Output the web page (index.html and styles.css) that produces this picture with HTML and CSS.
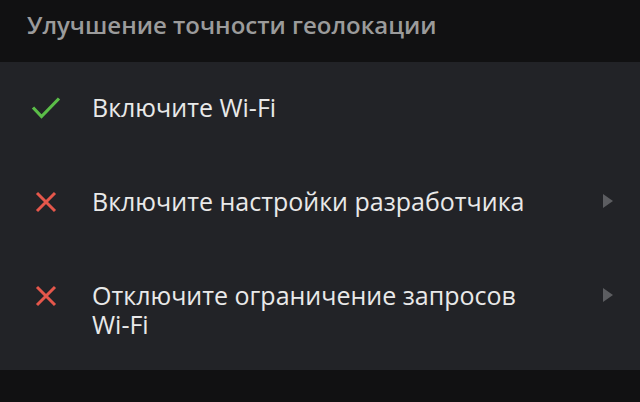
FILE: index.html
```html
<!DOCTYPE html>
<html lang="ru">
<head>
    <meta charset="UTF-8">
    <meta name="viewport" content="width=device-width, initial-scale=1.0">
    <title>Улучшение точности геолокации</title>
    <link rel="stylesheet" href="styles.css">
</head>
<body>
    <div class="header">
        <h2>Улучшение точности геолокации</h2>
    </div>

    <ul class="checklist">
        <li class="item done">
            <span class="mark">
                <svg width="30" height="24" viewBox="0 0 30 24"><path d="M2 11.5 L10.5 20.5 L28 2.5" fill="none" stroke="#5bbd48" stroke-width="3.2"/></svg>
            </span>
            <span class="label">Включите Wi-Fi</span>
        </li>
        <li class="item">
            <span class="mark">
                <svg width="22" height="22" viewBox="0 0 22 22"><path d="M2 2 L20 20 M20 2 L2 20" fill="none" stroke="#e5574b" stroke-width="3"/></svg>
            </span>
            <span class="label">Включите настройки разработчика</span>
            <span class="arrow"></span>
        </li>
        <li class="item">
            <span class="mark">
                <svg width="22" height="22" viewBox="0 0 22 22"><path d="M2 2 L20 20 M20 2 L2 20" fill="none" stroke="#e5574b" stroke-width="3"/></svg>
            </span>
            <span class="label">Отключите ограничение запросов Wi-Fi</span>
            <span class="arrow"></span>
        </li>
    </ul>
</body>
</html>
```

FILE: styles.css
```css
body {
    margin: 0;
    background-color: #111112;
    font-family: "Open Sans", "Noto Sans", sans-serif;
}
.header {
    height: 62px;
    padding: 0 27px;
}
.header h2 {
    margin: 0;
    padding-top: 10px;
    font-size: 24px;
    line-height: 30px;
    font-weight: 600;
    color: #9b9b9b;
}
.checklist {
    list-style: none;
    margin: 0;
    padding: 0;
    background-color: #222327;
}
.item {
    display: flex;
    align-items: flex-start;
    padding: 31px 27px 34px 0;
}
.item:last-child {
    padding-bottom: 31px;
}
.mark {
    width: 92px;
    height: 29px;
    display: flex;
    align-items: center;
    justify-content: center;
    flex-shrink: 0;
}
.label {
    flex: 1;
    max-width: 450px;
    font-size: 25px;
    line-height: 29px;
    color: #e9e9e9;
}
/* small grey triangle at the right edge */
.arrow {
    margin-left: auto;
    margin-top: 7px;
    width: 0;
    height: 0;
    border-top: 7px solid transparent;
    border-bottom: 7px solid transparent;
    border-left: 10px solid #5c5d61;
}
```
